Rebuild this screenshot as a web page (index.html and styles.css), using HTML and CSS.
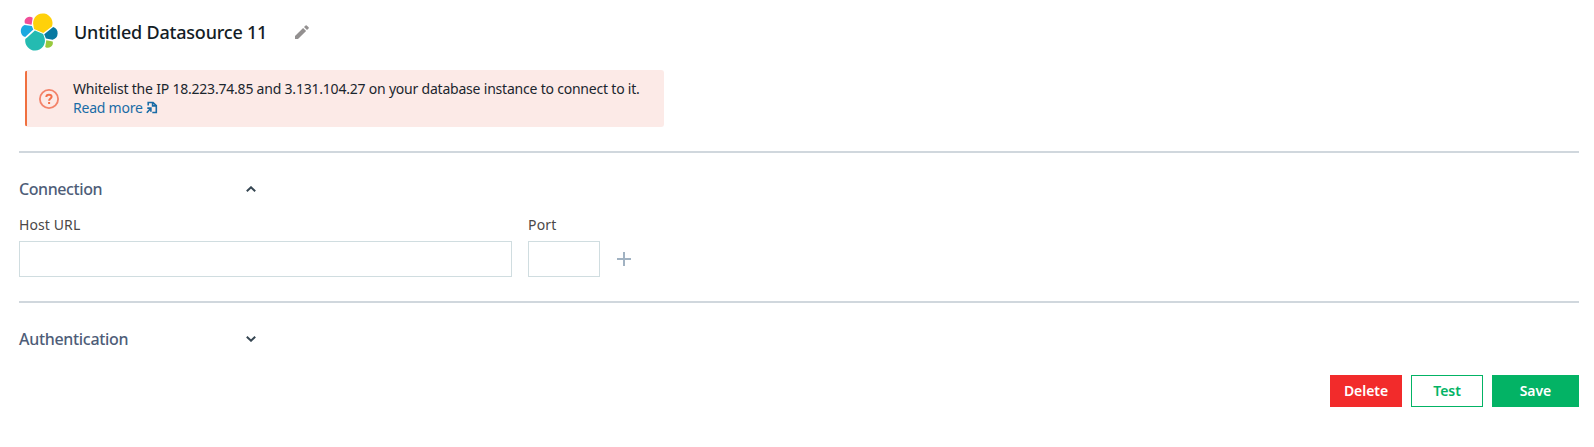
FILE: index.html
```html
<!DOCTYPE html>
<html lang="en">
<head>
<meta charset="utf-8">
<title>Untitled Datasource 11</title>
<link rel="stylesheet" href="styles.css">
</head>
<body>
<main class="page">
  <header class="header">
    <svg class="logo" width="40" height="40" viewBox="0 0 40 40" aria-hidden="true">
      <path fill="#ffd10a" d="M15 17 24.3 20.9 32.9 14.5A9.7 9.7 0 1 0 14.1 11.4z"/>
      <path fill="#24bbb1" d="M15.9 18.5 24.2 21.9 25.7 26.4A9.9 9.9 0 1 1 6.3 26.9L8.2 25.4z"/>
      <path fill="#f04e98" d="M6 11.6 12.6 12.8 13.7 5.8A5 5 0 0 0 6 11.6z"/>
      <path fill="#1ba9e0" d="M5.6 12.9 12.8 14 14.3 17.6 6.2 25.1A6.6 6.6 0 0 1 5.6 12.9z"/>
      <path fill="#97c93d" d="M26.2 34.9 27.3 28.2 33.7 29.4A5 5 0 0 1 26.2 34.9z"/>
      <path fill="#0779a1" d="M33.6 27.8 26.9 26.6 25.2 22.2 34.2 15A6.7 6.7 0 0 1 33.6 27.8z"/>
    </svg>
    <h1 class="title">Untitled Datasource 11</h1>
    <svg class="edit" width="14" height="14" viewBox="0 0 14 14" aria-hidden="true">
      <path fill="#939090" d="M0 11v3h3l8.1-8.1-3-3zM13.6 3.4a.8.8 0 0 0 0-1.1L11.7.4a.8.8 0 0 0-1.1 0L9 2l3 3z"/>
    </svg>
  </header>

  <div class="callout">
    <svg class="help" width="20" height="20" viewBox="0 0 20 20" fill="none" aria-hidden="true">
      <circle cx="10" cy="10" r="9.1" stroke="#f3836a" stroke-width="1.8"/>
      <path stroke="#f3704a" stroke-width="2" d="M7.3 8.1C7.3 6.5 8.5 5.7 10 5.7s2.6.8 2.6 2.1c0 1.7-2.5 1.8-2.5 4"/>
      <path fill="#f3704a" d="M9.1 13h2v2h-2z"/>
    </svg>
    <div class="callout-body">
      <div class="callout-text">Whitelist the IP 18.223.74.85 and 3.131.104.27 on your database instance to connect to it.</div>
      <a class="read-more"><span>Read more</span>
        <svg width="12" height="13" viewBox="0 0 12 13" fill="none" stroke="#1a6ca6" stroke-width="1.6" aria-hidden="true">
          <path d="M2.2 4.6V1.5H7l3.3 3.2v6.8H6.3M6.6 1.4v3.5h3.7"/>
          <path d="M1.3 7.1h3.6v3.7M4.8 7.2.8 11.8"/>
        </svg>
      </a>
    </div>
  </div>

  <section class="section">
    <div class="section-head">
      <h2 class="section-title connection">Connection</h2>
      <svg width="10" height="6" viewBox="0 0 10 6" fill="none" stroke="#364652" stroke-width="2" aria-hidden="true"><path d="M.8 5.2 5 1.3l4.2 3.9"/></svg>
    </div>
    <div class="fields">
      <label class="field host"><span class="label">Host URL</span><input class="input" type="text"></label>
      <label class="field port"><span class="label port-label">Port</span><input class="input" type="text"></label>
      <svg class="add" width="14" height="14" viewBox="0 0 14 14" aria-hidden="true"><path fill="#a1b2c2" d="M6 0h2v6h6v2H8v6H6V8H0V6h6z"/></svg>
    </div>
  </section>

  <section class="section">
    <div class="section-head">
      <h2 class="section-title">Authentication</h2>
      <svg width="10" height="6" viewBox="0 0 10 6" fill="none" stroke="#364652" stroke-width="2" aria-hidden="true"><path d="M.8.8 5 4.7 9.2.8"/></svg>
    </div>
  </section>

  <footer class="actions">
    <button class="btn delete">Delete</button>
    <button class="btn test">Test</button>
    <button class="btn save">Save</button>
  </footer>
</main>
</body>
</html>
```
FILE: styles.css
```css
* { box-sizing: border-box; }
body { margin: 0; background: #fff; font-family: "Noto Sans", sans-serif; }
svg { display: block; flex: none; }

.page { padding: 8px 15px 0 19px; }

.header { display: flex; align-items: center; height: 48px; }
.title { margin: 0 0 0 15px; font-size: 18px; font-weight: 500; line-height: 24px; letter-spacing: -0.2px; color: #131d26; white-space: nowrap; }
.edit { margin-left: 28px; }

.callout { display: flex; align-items: center; width: 639px; height: 57px; margin: 14px 0 0 6px; padding-left: 14px; background: linear-gradient(#f0703f, #f0703f) left center / 2px 55px no-repeat #fceae7; border-radius: 3px; }
.callout-body { margin-left: 14px; padding-bottom: 2px; font-size: 14px; line-height: 19px; color: #1b262e; white-space: nowrap; }
.callout-text { letter-spacing: -0.21px; }
.read-more { display: flex; align-items: center; gap: 3px; height: 19px; color: #1a6ca6; letter-spacing: -0.22px; }

.section { margin-top: 24px; padding-top: 24px; border-top: 2px solid #d0d7dd; }
.section-head { display: flex; align-items: center; justify-content: space-between; width: 237px; height: 24px; }
.section-title { margin: 0; font-size: 16px; font-weight: 500; line-height: 24px; letter-spacing: -0.31px; color: #4e5d78; }
.connection { letter-spacing: -0.42px; }

.fields { display: flex; align-items: flex-end; gap: 16px; margin-top: 14px; }
.field { display: flex; flex-direction: column; gap: 6px; }
.host { width: 493px; }
.port { width: 72px; }
.label { font-size: 14px; line-height: 20px; letter-spacing: 0.1px; color: #4b4848; }
.port-label { letter-spacing: 0.2px; }
.input { width: 100%; height: 36px; padding: 0 12px; border: 1px solid #d0dde0; border-radius: 0; background: #fff; font: inherit; outline: 0; }
.add { margin: 0 0 11px 1px; }

.actions { display: flex; justify-content: flex-end; gap: 9px; margin-top: 24px; }
.btn { width: 72px; height: 32px; padding: 0; border: 1px solid; border-radius: 0; font: 600 14px/20px "Noto Sans", sans-serif; letter-spacing: -0.05px; }
.delete { background: #f22b2b; border-color: #f22b2b; color: #fff; }
.test { background: #fff; border-color: #03b365; color: #03b365; }
.save { width: 87px; background: #03b365; border-color: #03b365; color: #fff; }
```
